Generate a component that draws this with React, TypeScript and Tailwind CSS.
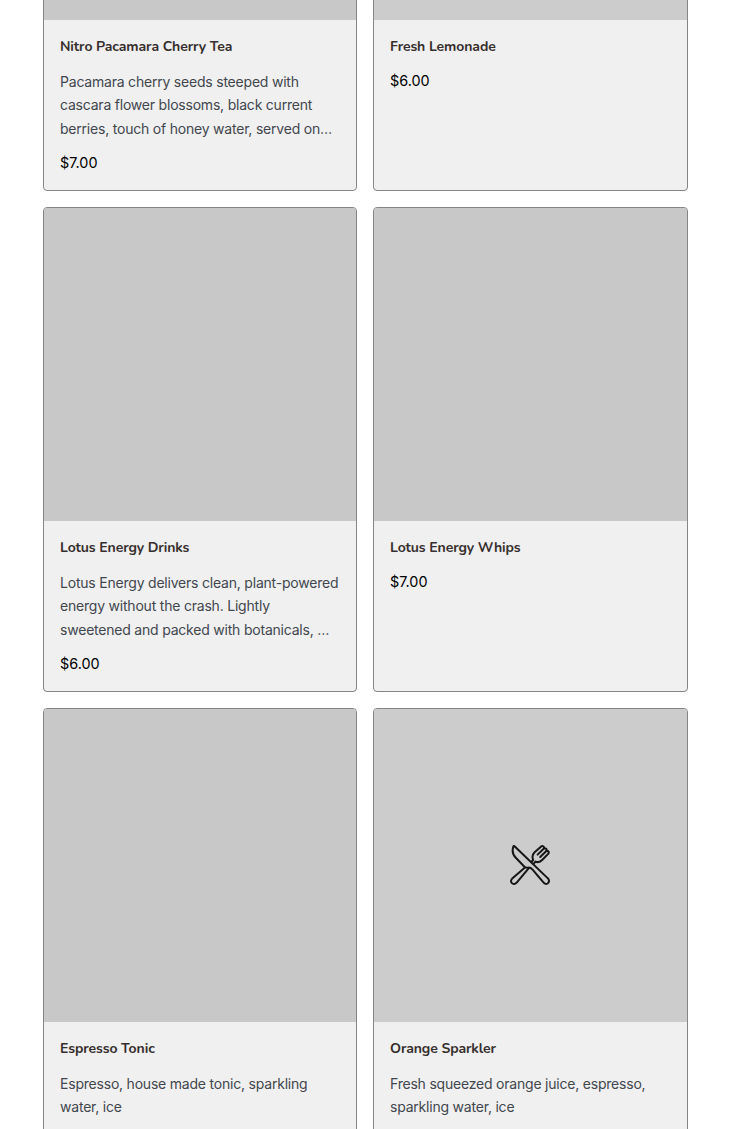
type MenuItem = {
  name: string;
  price?: string;
  description?: string;
  photo?: "light" | "icon";
};

const items: MenuItem[] = [
  {
    name: "Nitro Pacamara Cherry Tea",
    description:
      "Pacamara cherry seeds steeped with cascara flower blossoms, black current berries, touch of honey water, served on…",
    price: "$7.00",
  },
  { name: "Fresh Lemonade", price: "$6.00", photo: "light" },
  {
    name: "Lotus Energy Drinks",
    description:
      "Lotus Energy delivers clean, plant-powered energy without the crash. Lightly sweetened and packed with botanicals, …",
    price: "$6.00",
  },
  { name: "Lotus Energy Whips", price: "$7.00" },
  {
    name: "Espresso Tonic",
    description: "Espresso, house made tonic, sparkling water, ice",
  },
  {
    name: "Orange Sparkler",
    description: "Fresh squeezed orange juice, espresso, sparkling water, ice",
    photo: "icon",
  },
];

const UtensilsIcon = () => (
  <svg
    className="size-10 text-[#161616]"
    viewBox="0 0 40 40"
    fill="none"
    stroke="currentColor"
    strokeWidth="2"
    strokeLinecap="round"
    strokeLinejoin="round"
  >
    {/* knife */}
    <path d="M3.4 1.3C1.9 5.6 2.7 9.6 5.8 12.8L14.4 21.8C15.6 23 17 22.6 18.4 22.6C20 22.6 21.4 23.2 22.6 24.6L33.2 37.2C34.8 39.2 36.8 39.4 38 38.1C39.5 36.6 39.3 34.6 37.6 33.1L4.8 1.5C4.3 1 3.7 0.8 3.4 1.3Z" />
    {/* fork */}
    <path d="M15 22.6L2.2 33.6C0.7 35.1 0.6 36.8 1.9 38.1C3.2 39.4 5 39.3 6.5 37.8L18.8 23.2" />
    <path d="M21.2 17L23.2 15C21.8 11.8 22.4 9.4 24.6 7.2L31.2 1.4C32.4 0.5 34.4 1.6 34.2 3.2C35.8 2.9 37 4.2 36.6 5.7C38.3 5.6 39.4 7.2 38.4 8.6L32.4 14.8C30.2 17.2 27.8 17.6 25.4 16.6L23.6 18.8" />
    <path d="M34.2 3.2L27.6 9.6M36.6 5.7L30.2 12" />
  </svg>
);

const MenuCard = ({ item }: { item: MenuItem }) => (
  <article className="flex flex-col overflow-hidden rounded-[4px] border border-[#858585] bg-[#f0f0f0]">
    <div
      className={`flex h-[313px] shrink-0 items-center justify-center pr-px pb-px ${
        item.photo ? "bg-[#cccccc]" : "bg-[#c8c8c8]"
      }`}
    >
      {item.photo === "icon" && <UtensilsIcon />}
    </div>
    <div className="flex flex-col px-4 pt-[17px] pb-[14.8px]">
      <h3 className="h-5 whitespace-nowrap font-['Nunito','Nunito_Sans','Lato',sans-serif] text-sm leading-5 font-bold tracking-[-0.1px] text-[#362f2d]">
        {item.name}
      </h3>
      {item.description && (
        <p className="mt-[13px] -mb-px line-clamp-3 text-sm leading-[23.4px] tracking-[-0.21px] text-[#42474e]">
          {item.description}
        </p>
      )}
      {item.price && (
        <p className="mt-3 text-[14.4px] leading-6 text-black">{item.price}</p>
      )}
    </div>
  </article>
);

const App = () => {
  return (
    <main className="h-screen overflow-hidden bg-white font-['Inter',sans-serif]">
      {/* list is scrolled, so the first row starts above the window */}
      <div className="-mt-[294px] ml-[43px] grid w-[645px] grid-cols-[314px_315px] gap-4">
        {items.map((item) => (
          <MenuCard key={item.name} item={item} />
        ))}
      </div>
    </main>
  );
};

export default App;
